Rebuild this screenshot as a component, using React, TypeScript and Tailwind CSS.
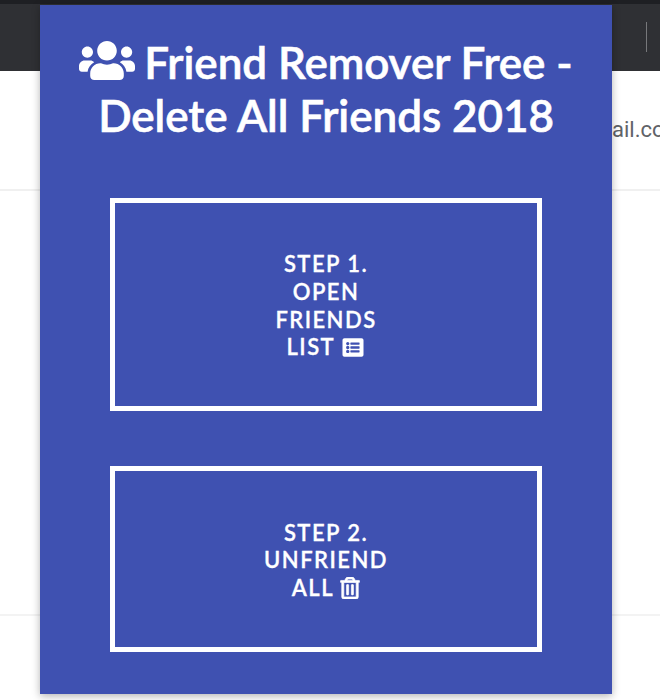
import { FaUsers, FaListAlt, FaRegTrashAlt } from "react-icons/fa";

export default function App() {
  return (
    <div className="relative w-[660px] h-[700px] overflow-hidden bg-white font-['Lato',sans-serif]">
      {/* Browser behind the popup */}
      <div className="h-[4px] bg-[#1e1f23]" />
      <div className="h-[67px] bg-[#2f3034] flex items-start justify-end pt-[18px] pr-[13px]">
        <div className="w-px h-[30px] bg-[#77787b]" />
      </div>
      <div className="h-[120px] border-b-2 border-[#f0f0f0] flex items-center justify-end pb-[2px]">
        <span className="font-['Roboto',sans-serif] text-[22px] text-[#5f6368] whitespace-nowrap w-[48px] overflow-hidden">ail.com</span>
      </div>
      <div className="h-[425px] border-b-2 border-[#f3f3f3]" />

      {/* Extension popup */}
      <div className="absolute left-[40px] top-[5px] w-[572px] h-[689px] bg-[#3f51b1] shadow-[0_2px_8px_rgba(0,0,0,0.3)] flex flex-col items-center text-white">
        <h1 className="mt-[31px] w-[530px] text-center text-[44px] leading-[53px] font-semibold tracking-[-0.05px] [-webkit-text-stroke:0.6px_white]">
          <FaUsers className="inline-block align-[-4px] mr-[9px] w-[56px] h-[45px]" />
          Friend Remover Free - Delete All Friends 2018
        </h1>
        <button className="mt-[56px] w-[432px] h-[213px] border-[5px] border-white flex items-center justify-center">
          <span className="w-[150px] pt-[2px] text-center text-[22px] leading-[27.6px] font-semibold tracking-[1.45px] [-webkit-text-stroke:0.3px_white]">
            STEP 1.<br />OPEN<br />FRIENDS<br />LIST <FaListAlt className="inline-block align-[-3px] w-[24px] h-[21px]" />
          </span>
        </button>
        <button className="mt-[55px] w-[432px] h-[186px] border-[5px] border-white flex items-center justify-center">
          <span className="w-[150px] pt-[2px] text-center text-[22px] leading-[27.6px] font-semibold tracking-[1.45px] [-webkit-text-stroke:0.3px_white]">
            STEP 2.<br />UNFRIEND<br />ALL <FaRegTrashAlt stroke="currentColor" strokeWidth={16} className="inline-block align-[-3px] w-[20px] h-[22px]" />
          </span>
        </button>
      </div>
    </div>
  );
}
